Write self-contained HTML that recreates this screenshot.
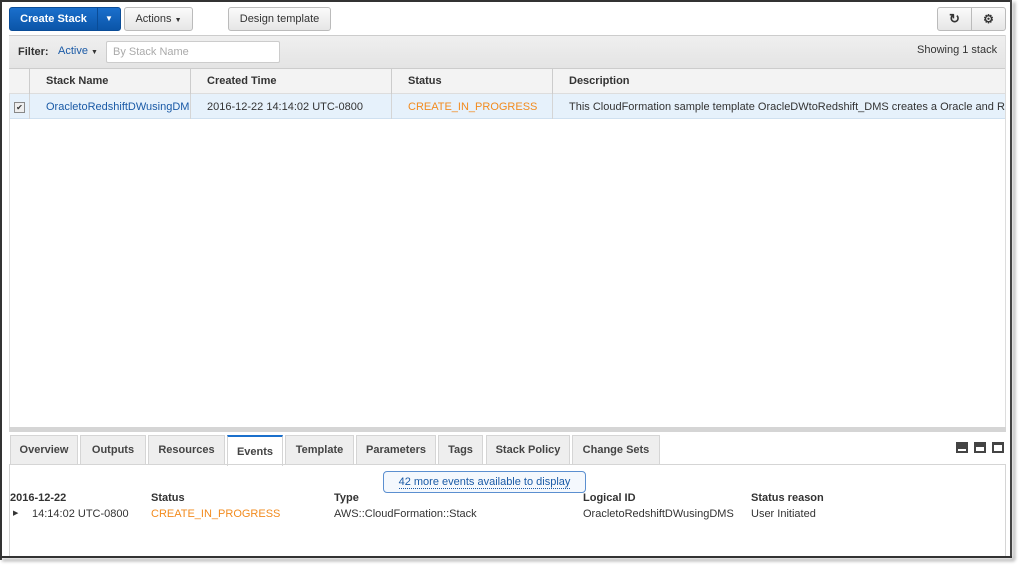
<!DOCTYPE html><html><head><style>
body{margin:0;width:1027px;height:574px;background:#fff;font-family:"Liberation Sans",Arial,sans-serif;font-size:11px;color:#333;position:relative;overflow:hidden}
.a{position:absolute}
.btn{position:absolute;border:1px solid #bbb;border-radius:3px;background:linear-gradient(#fafafa,#e6e6e6);text-align:center;line-height:22px;color:#333;box-sizing:border-box;height:24px}
.tab{position:absolute;top:435px;height:29px;border:1px solid #d5d5d5;border-bottom:none;background:#eee;box-sizing:border-box;line-height:28px;text-align:center;font-weight:bold;color:#444}
.th{position:absolute;top:68px;height:26px;line-height:26px;font-weight:bold;color:#333;border-right:1px solid #ccc;box-sizing:border-box;padding-left:16px}
.td{position:absolute;top:94px;height:25px;line-height:26px;border-right:1px solid #d5d5d5;box-sizing:border-box;padding-left:16px;white-space:nowrap;overflow:hidden}
</style></head><body>
<div class="a" style="left:0;top:0;width:1012px;height:2px;background:#333"></div>
<div class="a" style="left:0;top:0;width:2px;height:560px;background:#333"></div>
<div class="a" style="left:1010px;top:0;width:2px;height:558px;background:#444;box-shadow:3px 2px 3px #999"></div>
<div class="a" style="left:0;top:556px;width:1012px;height:2px;background:#333;box-shadow:2px 3px 3px #999"></div>
<div class="btn" style="left:9px;top:7px;width:89px;background:linear-gradient(#1a6fcc,#0b55a8);border-color:#0a4c97;color:#fff;font-weight:bold;border-radius:3px 0 0 3px">Create Stack</div>
<div class="btn" style="left:97px;top:7px;width:24px;background:linear-gradient(#1a6fcc,#0b55a8);border-color:#0a4c97;color:#fff;border-radius:0 3px 3px 0;font-size:8px">▼</div>
<div class="btn" style="left:124px;top:7px;width:69px">Actions <span style="font-size:7px">▼</span></div>
<div class="btn" style="left:228px;top:7px;width:103px">Design template</div>
<div class="btn" style="left:937px;top:7px;width:35px;border-radius:3px 0 0 3px;font-weight:bold;font-size:13px">↻</div>
<div class="btn" style="left:971px;top:7px;width:35px;border-radius:0 3px 3px 0;font-size:12px;font-weight:bold">⚙</div>
<div class="a" style="left:9px;top:35px;width:997px;height:33px;background:linear-gradient(#efefef,#e4e4e4);border-top:1px solid #ccc;box-sizing:border-box"></div>
<div class="a" style="left:18px;top:46px;font-weight:bold">Filter:</div>
<div class="a" style="left:58px;top:45px;color:#1a5aa6">Active <span style="font-size:7px;color:#333">▼</span></div>
<div class="a" style="left:106px;top:41px;width:174px;height:22px;background:#fff;border:1px solid #ccc;border-radius:2px;box-sizing:border-box;color:#aaa;padding-left:6px;line-height:20px">By Stack Name</div>
<div class="a" style="left:917px;top:44px">Showing 1 stack</div>
<div class="a" style="left:9px;top:68px;width:997px;height:26px;background:#f3f3f3;border-top:1px solid #ccc;border-bottom:1px solid #ddd;box-sizing:border-box"></div>
<div class="th" style="left:10px;width:20px"></div>
<div class="th" style="left:30px;width:161px">Stack Name</div>
<div class="th" style="left:191px;width:201px">Created Time</div>
<div class="th" style="left:392px;width:161px">Status</div>
<div class="th" style="left:553px;width:453px;border:none">Description</div>
<div class="a" style="left:9px;top:94px;width:997px;height:25px;background:#e6f1fb;border-bottom:1px solid #cfe0f0;box-sizing:border-box"></div>
<div class="td" style="left:10px;width:20px;padding-left:4px"><span style="display:inline-block;width:9px;height:9px;border:1px solid #888;background:#eee;font-size:8px;line-height:9px;text-align:center">✔</span></div>
<div class="td" style="left:30px;width:161px;color:#1a5aa6">OracletoRedshiftDWusingDMS</div>
<div class="td" style="left:191px;width:201px">2016-12-22 14:14:02 UTC-0800</div>
<div class="td" style="left:392px;width:161px;color:#f28b1e">CREATE_IN_PROGRESS</div>
<div class="td" style="left:553px;width:453px;border:none">This CloudFormation sample template OracleDWtoRedshift_DMS creates a Oracle and Redshift</div>
<div class="a" style="left:9px;top:94px;width:1px;height:333px;background:#ddd"></div>
<div class="a" style="left:1005px;top:35px;width:1px;height:392px;background:#ddd"></div>
<div class="a" style="left:9px;top:427px;width:997px;height:5px;background:#d5d5d5"></div>
<div class="tab" style="left:10px;width:68px">Overview</div>
<div class="tab" style="left:80px;width:66px">Outputs</div>
<div class="tab" style="left:148px;width:77px">Resources</div>
<div class="tab" style="left:227px;width:56px;background:#fff;border-top:2px solid #1a6fcc;height:31px;line-height:30px">Events</div>
<div class="tab" style="left:285px;width:69px">Template</div>
<div class="tab" style="left:356px;width:80px">Parameters</div>
<div class="tab" style="left:438px;width:45px">Tags</div>
<div class="tab" style="left:486px;width:84px">Stack Policy</div>
<div class="tab" style="left:572px;width:88px">Change Sets</div>
<div class="a" style="left:956px;top:442px;width:12px;height:11px;background:#444"><div style="position:absolute;left:2px;top:7px;width:8px;height:2px;background:#fff"></div></div>
<div class="a" style="left:974px;top:442px;width:12px;height:11px;background:#444"><div style="position:absolute;left:2px;top:5px;width:8px;height:4px;background:#fff"></div></div>
<div class="a" style="left:992px;top:442px;width:12px;height:11px;background:#444"><div style="position:absolute;left:2px;top:3px;width:8px;height:6px;background:#fff"></div></div>
<div class="a" style="left:9px;top:464px;width:997px;height:1px;background:#d5d5d5"></div>
<div class="a" style="left:9px;top:464px;width:1px;height:92px;background:#d5d5d5"></div>
<div class="a" style="left:1005px;top:464px;width:1px;height:92px;background:#d5d5d5"></div>
<div class="a" style="left:383px;top:471px;width:203px;height:22px;border:1px solid #5b8fd0;border-radius:4px;background:#f4f8fd;box-sizing:border-box;text-align:center;line-height:20px;color:#1a5aa6"><span style="border-bottom:1px dotted #1a5aa6">42 more events available to display</span></div>
<div class="a" style="left:10px;top:492px;font-weight:bold">2016-12-22</div>
<div class="a" style="left:151px;top:492px;font-weight:bold">Status</div>
<div class="a" style="left:334px;top:492px;font-weight:bold">Type</div>
<div class="a" style="left:583px;top:492px;font-weight:bold">Logical ID</div>
<div class="a" style="left:751px;top:492px;font-weight:bold">Status reason</div>
<div class="a" style="left:13px;top:509px;font-size:7px">▶</div>
<div class="a" style="left:32px;top:508px">14:14:02 UTC-0800</div>
<div class="a" style="left:151px;top:508px;color:#f28b1e">CREATE_IN_PROGRESS</div>
<div class="a" style="left:334px;top:508px">AWS::CloudFormation::Stack</div>
<div class="a" style="left:583px;top:508px">OracletoRedshiftDWusingDMS</div>
<div class="a" style="left:751px;top:508px">User Initiated</div>
</body></html>
